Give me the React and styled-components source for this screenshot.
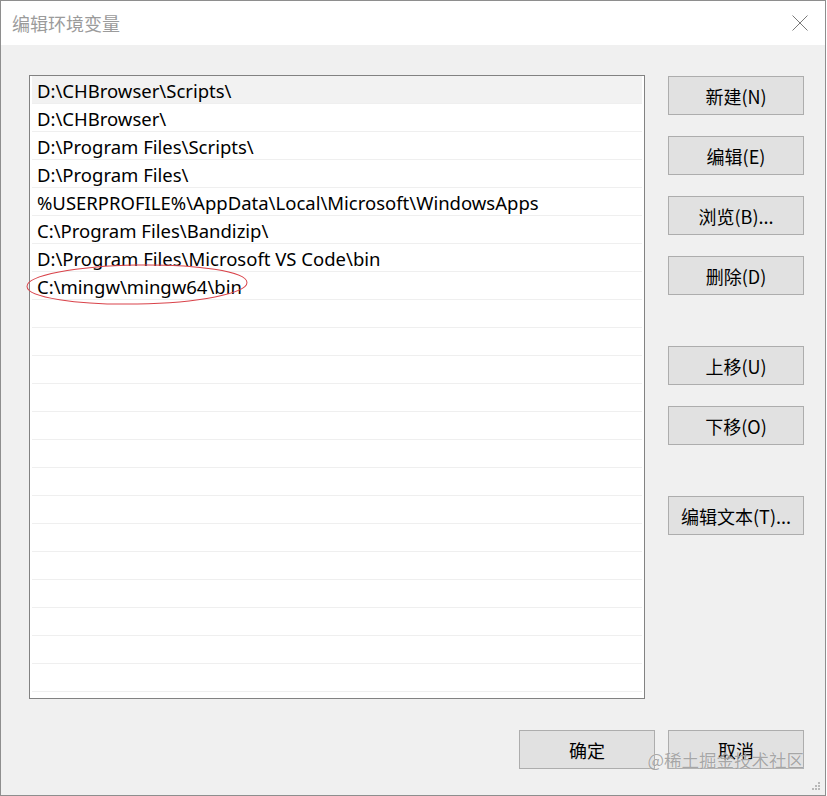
import React from "react";
import styled, { createGlobalStyle } from "styled-components";

const Global = createGlobalStyle`
  html, body { margin: 0; padding: 0; background: #ffffff; }
  body { font-family: "Noto Sans", "Noto Sans CJK SC", sans-serif; }
  * { box-sizing: border-box; }
`;

const Window = styled.div`
  position: relative;
  width: 826px;
  height: 796px;
  border: 1px solid #8e8e8e;
  background: #f0f0f0;
  display: flex;
  flex-direction: column;
  overflow: hidden;
`;

const TitleBar = styled.div`
  height: 44px;
  background: #ffffff;
  display: flex;
  align-items: center;
  justify-content: space-between;
  padding: 0 15px 0 11px;
`;

const Title = styled.div`
  font-family: "Noto Sans CJK SC", sans-serif;
  font-size: 18px;
  color: #9b9b9b;
  margin-top: -1px;
`;

const CloseIcon = styled.svg`
  width: 16px;
  height: 16px;
  margin-right: 2px;
`;

const Body = styled.div`
  flex: 1;
  display: flex;
  flex-direction: column;
  padding: 30px 21px 0 28px;
`;

const Content = styled.div`
  display: flex;
  gap: 23px;
`;

const ListBox = styled.div`
  width: 616px;
  height: 624px;
  border: 1px solid #828282;
  background: #ffffff;
  padding: 0 2px;
  overflow: hidden;
`;

const Row = styled.div`
  height: 28px;
  display: flex;
  align-items: center;
  padding: 2px 0 0 5px;
  border-bottom: 1px solid #efefef;
  background: ${(p) => (p.$focused ? "#f2f2f2" : "#ffffff")};
  font-family: "Noto Sans", "Noto Sans CJK SC", sans-serif;
  font-size: 18.5px;
  color: #000000;
  white-space: nowrap;
`;

const ButtonColumn = styled.div`
  display: flex;
  flex-direction: column;
  gap: 21px;
  padding-top: 1px;
  width: 136px;
`;

const Button = styled.button`
  width: 136px;
  height: 39px;
  margin-top: ${(p) => (p.$spaced ? "30px" : "0")};
  border: 1px solid #adadad;
  background: #e1e1e1;
  color: #000000;
  font-family: "Noto Sans CJK SC", sans-serif;
  font-size: 18px;
  padding: 0;
  display: flex;
  align-items: center;
  justify-content: center;
  cursor: default;
`;

const Footer = styled.div`
  display: flex;
  justify-content: flex-end;
  gap: 13px;
  margin-top: 31px;
`;

const Annotation = styled.svg`
  position: absolute;
  left: 24px;
  top: 262px;
  width: 226px;
  height: 44px;
  pointer-events: none;
`;

const Watermark = styled.div`
  position: absolute;
  right: 21px;
  bottom: 23px;
  font-family: "Noto Sans CJK SC", sans-serif;
  font-size: 17.5px;
  color: rgba(140, 140, 140, 0.75);
  text-shadow: 0 0 1px rgba(255, 255, 255, 0.8);
  pointer-events: none;
`;

const Grip = styled.svg`
  position: absolute;
  right: 5px;
  bottom: 5px;
  width: 9px;
  height: 9px;
`;

const paths = [
  "D:\\CHBrowser\\Scripts\\",
  "D:\\CHBrowser\\",
  "D:\\Program Files\\Scripts\\",
  "D:\\Program Files\\",
  "%USERPROFILE%\\AppData\\Local\\Microsoft\\WindowsApps",
  "C:\\Program Files\\Bandizip\\",
  "D:\\Program Files\\Microsoft VS Code\\bin",
  "C:\\mingw\\mingw64\\bin",
];

const rows = [...paths, ...Array(14).fill("")];

const sideButtons = [
  { label: "新建(N)" },
  { label: "编辑(E)" },
  { label: "浏览(B)..." },
  { label: "删除(D)" },
  { label: "上移(U)", spaced: true },
  { label: "下移(O)" },
  { label: "编辑文本(T)...", spaced: true },
];

export default function App() {
  return (
    <>
      <Global />
      <Window>
        <TitleBar>
          <Title>编辑环境变量</Title>
          <CloseIcon viewBox="0 0 16 16">
            <path d="M0.5 0.5 L15.5 15.5 M15.5 0.5 L0.5 15.5" stroke="#7a7a7a" strokeWidth="1" fill="none" />
          </CloseIcon>
        </TitleBar>
        <Body>
          <Content>
            <ListBox>
              {rows.map((r, i) => (
                <Row key={i} $focused={i === 0}>
                  {r}
                </Row>
              ))}
            </ListBox>
            <ButtonColumn>
              {sideButtons.map((b) => (
                <Button key={b.label} $spaced={b.spaced}>
                  {b.label}
                </Button>
              ))}
            </ButtonColumn>
          </Content>
          <Footer>
            <Button>确定</Button>
            <Button>取消</Button>
          </Footer>
        </Body>
        <Annotation viewBox="0 0 226 44">
          <ellipse cx="112" cy="21.5" rx="110" ry="19.5" fill="none" stroke="#d9434a" strokeWidth="1" transform="rotate(-1 112 21.5)" />
        </Annotation>
        <Watermark>@稀土掘金技术社区</Watermark>
        <Grip viewBox="0 0 9 9">
          <rect x="7" y="1" width="2" height="2" fill="#b8b8b8" />
          <rect x="4" y="4" width="2" height="2" fill="#b8b8b8" />
          <rect x="7" y="4" width="2" height="2" fill="#b8b8b8" />
          <rect x="1" y="7" width="2" height="2" fill="#b8b8b8" />
          <rect x="4" y="7" width="2" height="2" fill="#b8b8b8" />
          <rect x="7" y="7" width="2" height="2" fill="#b8b8b8" />
        </Grip>
      </Window>
    </>
  );
}
